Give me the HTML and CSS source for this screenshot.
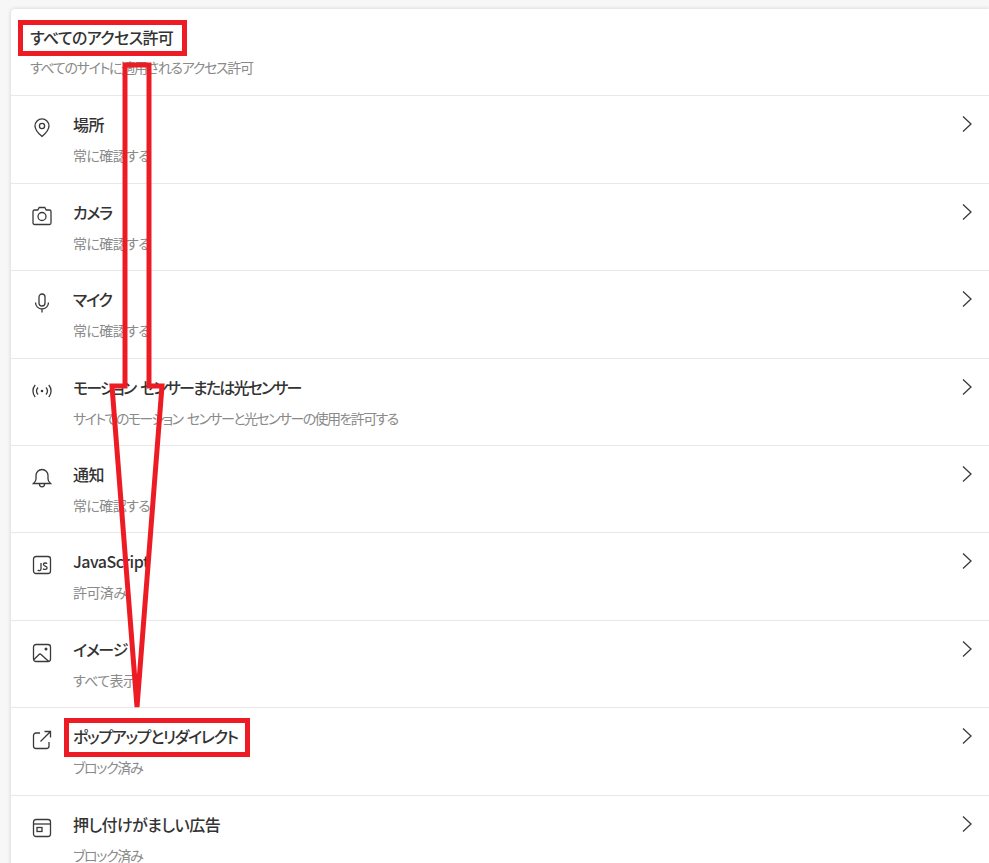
FILE: index.html
```html
<!DOCTYPE html>
<html lang="ja">
<head>
    <meta charset="UTF-8">
    <title>すべてのアクセス許可</title>
    <link rel="stylesheet" href="styles.css">
</head>
<body>
    <div class="card">
        <div class="card-header">
            <h2>すべてのアクセス許可</h2>
            <p class="kana">すべてのサイトに適用されるアクセス許可</p>
        </div>

        <div class="row">
            <svg class="icon" viewBox="0 0 20 20"><path d="M10 18.500c-1-.9-7-6-7-10.600a7 7 0 0 1 14 0c0 4.600-6 9.700-7 10.600z"/><circle cx="10" cy="8" r="2.600"/></svg>
            <div class="row-text"><div class="row-title">場所</div><div class="row-sub">常に確認する</div></div>
            <svg class="chevron" viewBox="0 0 12 18"><path d="M2 1.500 10 9l-8 7.500"/></svg>
        </div>
        <div class="row">
            <svg class="icon" viewBox="0 0 20 20"><path d="M2.500 4h3.300L7.200 1.500h5.600L14.200 4h3.300A1.500 1.500 0 0 1 19 5.500V17a1.500 1.500 0 0 1-1.500 1.500h-15A1.500 1.500 0 0 1 1 17V5.500A1.500 1.500 0 0 1 2.500 4z"/><circle cx="10" cy="10.500" r="4"/></svg>
            <div class="row-text"><div class="row-title kana">カメラ</div><div class="row-sub">常に確認する</div></div>
            <svg class="chevron" viewBox="0 0 12 18"><path d="M2 1.500 10 9l-8 7.500"/></svg>
        </div>
        <div class="row">
            <svg class="icon" viewBox="0 0 20 20"><rect x="7" y="1" width="6" height="12" rx="3"/><path d="M3.500 9.500a6.500 6.500 0 0 0 13 0M10 16v3.500"/></svg>
            <div class="row-text"><div class="row-title kana">マイク</div><div class="row-sub">常に確認する</div></div>
            <svg class="chevron" viewBox="0 0 12 18"><path d="M2 1.500 10 9l-8 7.500"/></svg>
        </div>
        <div class="row">
            <svg class="icon" viewBox="0 0 20 20"><path d="M3.200 4c-3 3.500-3 8.500 0 12M16.800 4c3 3.500 3 8.500 0 12M6 6.500c-1.800 2.100-1.800 4.900 0 7M14 6.500c1.800 2.100 1.800 4.900 0 7"/><circle class="dot" cx="10" cy="10" r="1.300"/></svg>
            <div class="row-text"><div class="row-title kana-long">モーション センサーまたは光センサー</div><div class="row-sub kana-long">サイトでのモーション センサーと光センサーの使用を許可する</div></div>
            <svg class="chevron" viewBox="0 0 12 18"><path d="M2 1.500 10 9l-8 7.500"/></svg>
        </div>
        <div class="row">
            <svg class="icon" viewBox="0 0 20 20"><path d="M1.500 15.500c1.300-1.300 2.500-2.500 2.500-4.500V7.500a6 6 0 0 1 12 0V11c0 2 1.200 3.200 2.500 4.500z"/><path d="M7.500 15.500v.8a2.500 2.500 0 0 0 5 0v-.8"/></svg>
            <div class="row-text"><div class="row-title">通知</div><div class="row-sub">常に確認する</div></div>
            <svg class="chevron" viewBox="0 0 12 18"><path d="M2 1.500 10 9l-8 7.500"/></svg>
        </div>
        <div class="row">
            <svg class="icon" viewBox="0 0 20 20"><rect x="1.500" y="1.500" width="17" height="17" rx="2.500"/><path d="M9 8v6a1.800 1.800 0 0 1-3.200 1M15 8.700c-.5-.9-3.500-1.200-3.600.7-.1 2 3.800 1.300 3.700 3.500-.1 2-3.300 1.900-4 .7"/></svg>
            <div class="row-text"><div class="row-title">JavaScript</div><div class="row-sub">許可済み</div></div>
            <svg class="chevron" viewBox="0 0 12 18"><path d="M2 1.500 10 9l-8 7.500"/></svg>
        </div>
        <div class="row">
            <svg class="icon" viewBox="0 0 20 20"><rect x="1.500" y="1.500" width="17" height="17" rx="2.500"/><path d="m2 16.500 5-5a1.500 1.500 0 0 1 2.100 0l7.400 6.800"/><circle class="dot" cx="14" cy="6" r="1.500"/></svg>
            <div class="row-text"><div class="row-title kana">イメージ</div><div class="row-sub">すべて表示</div></div>
            <svg class="chevron" viewBox="0 0 12 18"><path d="M2 1.500 10 9l-8 7.500"/></svg>
        </div>
        <div class="row">
            <svg class="icon" viewBox="0 0 20 20"><path d="M8 3H4a2.500 2.500 0 0 0-2.500 2.500V16A2.500 2.500 0 0 0 4 18.500h10.500A2.500 2.500 0 0 0 17 16v-4M12.500 1.500h6v6M18.500 1.500 8.500 11.500"/></svg>
            <div class="row-text"><div class="row-title kana">ポップアップとリダイレクト</div><div class="row-sub kana">ブロック済み</div></div>
            <svg class="chevron" viewBox="0 0 12 18"><path d="M2 1.500 10 9l-8 7.500"/></svg>
        </div>
        <div class="row">
            <svg class="icon" viewBox="0 0 20 20"><rect x="1.500" y="1.500" width="17" height="17" rx="2.500"/><path d="M1.500 6h17"/><rect x="5" y="9.500" width="5" height="4"/></svg>
            <div class="row-text"><div class="row-title">押し付けがましい広告</div><div class="row-sub kana">ブロック済み</div></div>
            <svg class="chevron" viewBox="0 0 12 18"><path d="M2 1.500 10 9l-8 7.500"/></svg>
        </div>
    </div>

    <!-- red annotations drawn on top of the screenshot -->
    <svg class="marks" viewBox="0 0 989 863">
        <rect x="20.500" y="22.500" width="164" height="31"/>
        <rect x="66.500" y="720.500" width="181" height="34"/>
        <path d="M125 65h24v321h13l-25 321-25-321h13z"/>
    </svg>
</body>
</html>
```

FILE: styles.css
```css
html, body {
    height: 100%;
}
body {
    margin: 0;
    overflow: hidden;
    background-color: #f7f7f7;
    color: #333;
    font-family: "Noto Sans CJK JP", "Noto Sans", sans-serif;
    font-feature-settings: "palt";
}
.card {
    margin: 9px 0 0 11px;
    background-color: #fff;
    border-radius: 4px 0 0 0;
    box-shadow: 0 0 4px rgba(0, 0, 0, 0.16);
}
.card-header {
    height: 86.4px;
    padding-left: 19px;
    box-sizing: border-box;
}
.card-header h2 {
    margin: 0;
    padding-top: 17px;
    font-size: 16px;
    line-height: 22px;
    font-weight: 500;
    letter-spacing: -0.6px;
}
.card-header p {
    margin: 9px 0 0;
    font-size: 14px;
    line-height: 20px;
    color: #8a8a8a;
}
.row {
    display: flex;
    align-items: flex-start;
    height: 87.4px;
    box-sizing: border-box;
    border-top: 1px solid #e8e8e8;
    padding: 18px 16px 0 21px;
}
.icon {
    width: 20px;
    height: 20px;
    margin-top: 4px;
    fill: none;
    stroke: #3a3a3a;
    stroke-width: 1.300;
}
.icon .dot {
    fill: #3a3a3a;
    stroke: none;
}
.row-text {
    flex: 1;
    margin-left: 21px;
}
.row-title {
    font-size: 16px;
    line-height: 21px;
    font-weight: 500;
    letter-spacing: -0.5px;
}
.row-sub {
    margin-top: 10px;
    font-size: 14px;
    line-height: 20px;
    color: #8a8a8a;
    letter-spacing: -0.6px;
}
/* katakana runs sit tighter than the kanji in the original font */
.row-title.kana, .row-sub.kana, .card-header p.kana {
    letter-spacing: -1.3px;
}
.row-title.kana-long {
    letter-spacing: -1.85px;
    word-spacing: 3px;
}
.row-sub.kana-long {
    letter-spacing: -1.6px;
    word-spacing: 3px;
}
.chevron {
    width: 12px;
    height: 18px;
    margin-top: 1px;
    fill: none;
    stroke: #3a3a3a;
    stroke-width: 1.300;
}
.marks {
    position: absolute;
    left: 0;
    top: 0;
    width: 989px;
    height: 863px;
    fill: none;
    stroke: #ed1c24;
    stroke-width: 5;
}
```
